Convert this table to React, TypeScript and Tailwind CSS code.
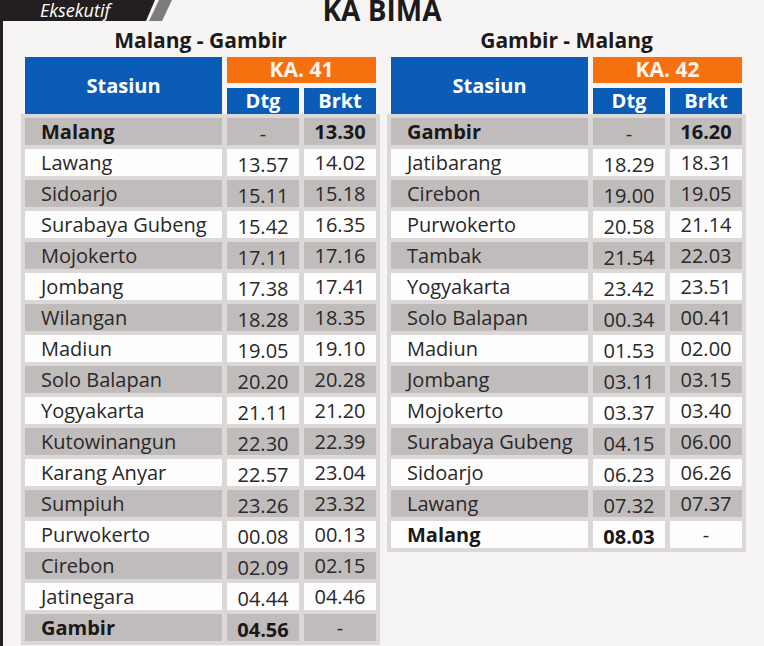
import React from 'react';

type Row = [string, string, string];

const malangGambir: Row[] = [
  ['Malang', '-', '13.30'],
  ['Lawang', '13.57', '14.02'],
  ['Sidoarjo', '15.11', '15.18'],
  ['Surabaya Gubeng', '15.42', '16.35'],
  ['Mojokerto', '17.11', '17.16'],
  ['Jombang', '17.38', '17.41'],
  ['Wilangan', '18.28', '18.35'],
  ['Madiun', '19.05', '19.10'],
  ['Solo Balapan', '20.20', '20.28'],
  ['Yogyakarta', '21.11', '21.20'],
  ['Kutowinangun', '22.30', '22.39'],
  ['Karang Anyar', '22.57', '23.04'],
  ['Sumpiuh', '23.26', '23.32'],
  ['Purwokerto', '00.08', '00.13'],
  ['Cirebon', '02.09', '02.15'],
  ['Jatinegara', '04.44', '04.46'],
  ['Gambir', '04.56', '-'],
];

const gambirMalang: Row[] = [
  ['Gambir', '-', '16.20'],
  ['Jatibarang', '18.29', '18.31'],
  ['Cirebon', '19.00', '19.05'],
  ['Purwokerto', '20.58', '21.14'],
  ['Tambak', '21.54', '22.03'],
  ['Yogyakarta', '23.42', '23.51'],
  ['Solo Balapan', '00.34', '00.41'],
  ['Madiun', '01.53', '02.00'],
  ['Jombang', '03.11', '03.15'],
  ['Mojokerto', '03.37', '03.40'],
  ['Surabaya Gubeng', '04.15', '06.00'],
  ['Sidoarjo', '06.23', '06.26'],
  ['Lawang', '07.32', '07.37'],
  ['Malang', '08.03', '-'],
];

const Schedule: React.FC<{ title: string; train: string; rows: Row[] }> = ({ title, train, rows }) => {
  return (
    <div className="w-[359px]">
      <div className="h-[36px] pt-[6px] text-center text-[21px] leading-[26px] font-bold text-[#1c1a1a]">
        {title}
      </div>
      <div className="px-[4px] grid grid-cols-[197px_72px_72px] grid-rows-[26px_26px] gap-[5px] text-white font-bold">
        <div className="row-span-2 bg-[#0b5cb6] flex items-center justify-center text-[20px]">Stasiun</div>
        <div className="col-span-2 bg-[#f77010] flex items-center justify-center text-[21px] text-[#fff4ea]">{train}</div>
        <div className="bg-[#0b5cb6] flex items-center justify-center text-[20px]">Dtg</div>
        <div className="bg-[#0b5cb6] flex items-center justify-center text-[20px]">Brkt</div>
      </div>
      <div className="bg-[#dbd8d7] p-[4px] grid grid-cols-[197px_72px_72px] auto-rows-[27px] gap-x-[5px] gap-y-[4px] text-[20px] text-[#2a2828]">
        {rows.map(([name, dtg, brkt], i) => {
          const bg = i % 2 === 0 ? 'bg-[#c0bcbb]' : 'bg-[#fdfdfd]';
          const edge = i === 0 || i === rows.length - 1;
          return (
            <React.Fragment key={name + i}>
              <div className={`${bg} flex items-center pl-[16px] ${edge ? 'font-bold text-[#1a1818]' : ''}`}>{name}</div>
              <div className={`${bg} flex items-center justify-center pt-[4px] ${edge && dtg !== '-' ? 'font-bold text-[#1a1818]' : ''}`}>{dtg}</div>
              <div className={`${bg} flex items-center justify-center ${edge && brkt !== '-' ? 'font-bold text-[#1a1818]' : ''}`}>{brkt}</div>
            </React.Fragment>
          );
        })}
      </div>
    </div>
  );
};

export default function App() {
  return (
    <div className="w-[764px] h-[646px] overflow-hidden bg-[#f6f5f4] border-l-[3px] border-[#231f20] font-['Open_Sans',sans-serif]">
      <div className="grid grid-cols-[1fr_auto_1fr] h-[21px] -ml-[3px]">
        <div className="relative w-[172px] h-[21px]">
          {/* slanted tab behind the label */}
          <svg className="absolute inset-0" width="172" height="21" viewBox="0 0 172 21">
            <polygon points="0,0 155,0 146,21 0,21" fill="#231f20" />
            <polygon points="159,0 172,0 162,21 149,21" fill="#7e7b7b" />
          </svg>
          <div className="relative pl-[40px] text-white italic text-[18px] leading-[21px]">Eksekutif</div>
        </div>
        <div className="text-[28px] leading-[28px] font-bold text-[#1c1a1a] -mt-[4px]">KA BIMA</div>
        <div />
      </div>
      <div className="flex pl-[18px] gap-[7px]">
        <Schedule title="Malang - Gambir" train="KA. 41" rows={malangGambir} />
        <Schedule title="Gambir - Malang" train="KA. 42" rows={gambirMalang} />
      </div>
    </div>
  );
}
